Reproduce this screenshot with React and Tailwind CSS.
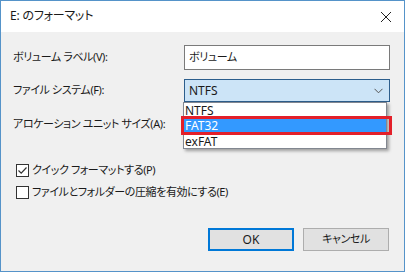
import React from 'react';

const font = "font-['Segoe_UI','Noto_Sans','Noto_Sans_CJK_JP',sans-serif] [font-feature-settings:'palt']";
const label = 'text-[11px] tracking-[-0.4px] text-[#1a1a1a]';

const Checkbox = ({ checked, text }) => (
  <div className="flex items-center h-[22px]">
    <div className="w-[13px] h-[13px] border border-[#333333] bg-white flex items-center justify-center">
      {checked && (
        <svg width="11" height="11" viewBox="0 0 11 11">
          <path d="M1.5 5.5 L4.2 8.2 L9.5 2.5" fill="none" stroke="#333333" strokeWidth="1.2" />
        </svg>
      )}
    </div>
    <span className={`ml-[3px] ${label}`}>{text}</span>
  </div>
);

const FormatDialog = () => {
  return (
    <div className={`w-[405px] h-[272px] border border-[#5593c9] bg-[#f0f0f0] flex flex-col ${font}`}>
      <div className="h-[31px] bg-white flex items-center justify-between pl-[9px] pr-[12px] shrink-0">
        <span className="text-[12px] tracking-[-0.2px] text-[#1a1a1a] mt-[-2px]">E: のフォーマット</span>
        <svg width="12" height="12" viewBox="0 0 12 12">
          <path d="M1 1 L11 11 M11 1 L1 11" stroke="#222222" strokeWidth="1" />
        </svg>
      </div>

      <div className="relative flex-1 flex flex-col pl-[12px] pr-[14px] pt-[13px]">
        <div className="flex items-center justify-between h-[25px]">
          <span className={label}>ボリューム ラベル(V):</span>
          <div className={`w-[206px] h-[25px] bg-white border border-[#7a7a7a] flex items-center pl-[4px] ${label}`}>
            ボリューム
          </div>
        </div>

        <div className="flex items-center justify-between h-[23px] mt-[9px]">
          <span className={label}>ファイル システム(F):</span>
          <div className="w-[206px] h-[23px] bg-[#cce4f7] border border-[#2d5e8c] flex items-center justify-between pl-[4px] pr-[6px] text-[12px] text-[#1a1a1a]">
            <span>NTFS</span>
            <svg width="9" height="6" viewBox="0 0 9 6">
              <path d="M0.5 0.8 L4.5 4.8 L8.5 0.8" fill="none" stroke="#555555" strokeWidth="1" />
            </svg>
          </div>
        </div>

        <div className="flex items-center h-[23px] mt-[11px]">
          <span className={label}>アロケーション ユニット サイズ(A):</span>
        </div>

        <div className="flex flex-col pl-[3px] mt-[23px]">
          <Checkbox checked text="クイック フォーマットする(P)" />
          <Checkbox text="ファイルとフォルダーの圧縮を有効にする(E)" />
        </div>

        <div className="flex justify-end gap-[9px] mt-auto mb-[20px] pr-[1px]">
          <button className="w-[86px] h-[23px] bg-[#e1e1e1] border-2 border-[#0078d7] text-[12px] text-[#1a1a1a] flex items-center justify-center">
            OK
          </button>
          <button className={`w-[86px] h-[23px] bg-[#e1e1e1] border border-[#adadad] flex items-center justify-center ${label}`}>
            キャンセル
          </button>
        </div>

        <div className="absolute left-[182px] top-[70px] w-[204px] h-[47px] bg-white border border-[#828790] shadow-[2px_2px_3px_rgba(0,0,0,0.35)] flex flex-col text-[12px]">
          <div className="h-[15px] flex items-center pl-[1px] text-[#1a1a1a]">NTFS</div>
          <div className="h-[16px] flex items-center pl-[1px] bg-[#3399ff] text-white">FAT32</div>
          <div className="h-[15px] flex items-center pl-[1px] text-[#1a1a1a]">exFAT</div>
        </div>
        <div className="absolute left-[180px] top-[84px] w-[211px] h-[19px] border-[3px] border-[#e3202a]" />
      </div>
    </div>
  );
};

export default function App() {
  return <FormatDialog />;
}
